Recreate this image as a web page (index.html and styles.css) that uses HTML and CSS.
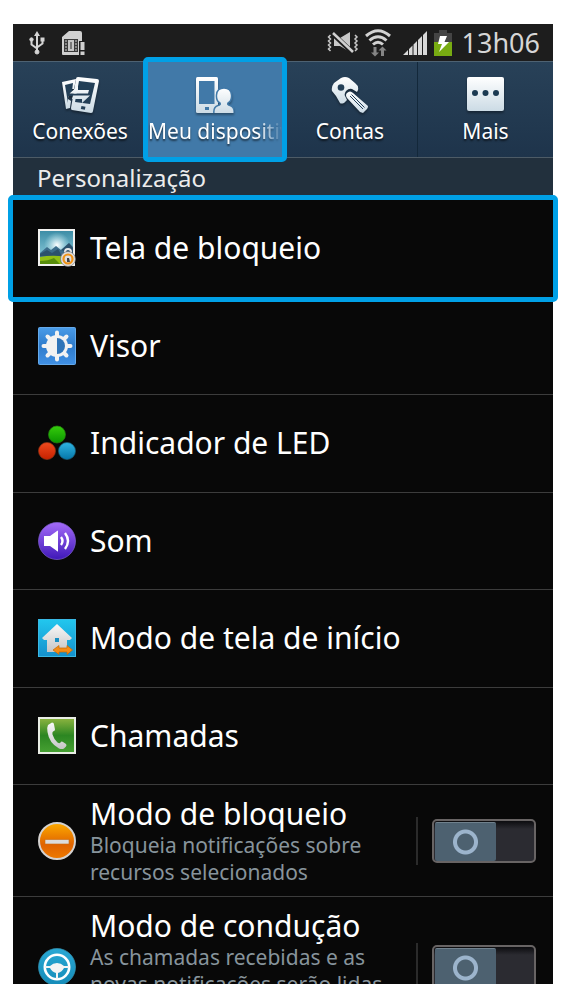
FILE: index.html
```html
<!DOCTYPE html>
<html lang="pt-BR">
<head>
    <meta charset="UTF-8">
    <meta name="viewport" content="width=device-width, initial-scale=1.0">
    <title>Configurações</title>
    <link rel="stylesheet" href="styles.css">
</head>
<body>
    <!-- Degradês usados pelos ícones -->
    <svg class="defs" width="0" height="0" aria-hidden="true">
        <defs>
            <linearGradient id="g-white" x1="0" y1="0" x2="0" y2="1"><stop offset="0" stop-color="#fff"/><stop offset="1" stop-color="#ccdbe5"/></linearGradient>
            <linearGradient id="g-sky" x1="0" y1="0" x2="0" y2="1"><stop offset="0" stop-color="#3d8da6"/><stop offset="1" stop-color="#9bd8e6"/></linearGradient>
            <radialGradient id="g-sun"><stop offset="0" stop-color="#fff"/><stop offset="1" stop-color="#bdeaf2" stop-opacity="0"/></radialGradient>
            <linearGradient id="g-blue" x1="0" y1="0" x2="0" y2="1"><stop offset="0" stop-color="#4a9ce8"/><stop offset=".5" stop-color="#2e7bcb"/><stop offset="1" stop-color="#4090e4"/></linearGradient>
            <linearGradient id="g-led-green" x1="0" y1="0" x2="0" y2="1"><stop offset="0" stop-color="#36cc0c"/><stop offset="1" stop-color="#0a9500"/></linearGradient>
            <linearGradient id="g-led-red" x1="0" y1="0" x2="0" y2="1"><stop offset="0" stop-color="#f04a1e"/><stop offset="1" stop-color="#c62100"/></linearGradient>
            <linearGradient id="g-led-blue" x1="0" y1="0" x2="0" y2="1"><stop offset="0" stop-color="#2fb5e2"/><stop offset="1" stop-color="#0576a8"/></linearGradient>
            <linearGradient id="g-purple" x1="0" y1="0" x2="0" y2="1"><stop offset="0" stop-color="#a46bf8"/><stop offset="1" stop-color="#3f18b8"/></linearGradient>
            <linearGradient id="g-cyan" x1="0" y1="0" x2="0" y2="1"><stop offset="0" stop-color="#22c7ee"/><stop offset="1" stop-color="#1590cc"/></linearGradient>
            <linearGradient id="g-house" x1="0" y1="0" x2="0" y2="1"><stop offset="0" stop-color="#f8f8f8"/><stop offset="1" stop-color="#c6c6c6"/></linearGradient>
            <linearGradient id="g-call" x1="0" y1="0" x2="0" y2="1"><stop offset="0" stop-color="#88b23e"/><stop offset=".5" stop-color="#2c8622"/><stop offset="1" stop-color="#46a032"/></linearGradient>
            <linearGradient id="g-orange" x1="0" y1="0" x2="0" y2="1"><stop offset="0" stop-color="#fdab00"/><stop offset=".6" stop-color="#e06300"/><stop offset="1" stop-color="#ee7a00"/></linearGradient>
            <linearGradient id="g-wheel" x1="0" y1="0" x2="0" y2="1"><stop offset="0" stop-color="#29a8d4"/><stop offset="1" stop-color="#158bb8"/></linearGradient>
        </defs>
    </svg>

    <div class="phone">
        <!-- Barra de status -->
        <header class="status-bar">
            <svg class="usb" width="16" height="24" viewBox="0 0 16 24" fill="#d4d4d4" stroke="#d4d4d4">
                <path d="M8 4v17M2.500 9v4.500l5.500 4M13.500 9v3.500l-5.500 4" fill="none" stroke-width="2"/>
                <path d="M8 0l3 5H5z" stroke="none"/>
                <circle cx="2.500" cy="8.500" r="1.700"/>
                <path d="M11.500 6.500h4v4h-4z" stroke="none"/>
                <circle cx="8" cy="21" r="2"/>
            </svg>
            <svg class="sim" width="24" height="26" viewBox="0 0 24 26">
                <path d="M0 24V7l7-6h11q2 0 2 2v8h-3v14H1q-1 0-1-1z" fill="#d0d0d0"/>
                <path d="M2 9h14v13H2z" fill="#3a3a3a"/>
                <path d="M3 11h2M3 14h2M3 17h2M3 20h2M13 11h2M13 14h2M13 17h2M13 20h2" stroke="#d0d0d0"/>
                <path d="M6 10h6v11H6z" fill="#c4c4c4"/>
                <path d="M8 12h2v7H8z" fill="#777"/>
                <path d="M18.500 12h4v8h-4zM18.500 21.500h4v3.500h-4z" fill="#d0d0d0"/>
            </svg>
            <span class="spacer"></span>
            <svg class="mute" width="32" height="24" viewBox="0 0 32 24">
                <path d="M3.500 4l-2 2 2 2-2 2 2 2-2 2 2 2-2 2 2 2M28 4l2 2-2 2 2 2-2 2 2 2-2 2 2 2-2 2" fill="none" stroke="#c8c8c8" stroke-width="1.500"/>
                <path d="M7 7h6l10-6v20l-10-6H7z" fill="#c8c8c8"/>
                <path d="M6 3l20 19" stroke="#1d1d1d" stroke-width="5"/>
                <path d="M6 2l20 19" stroke="#d0d0d0" stroke-width="2.500"/>
            </svg>
            <svg class="wifi" width="26" height="28" viewBox="0 0 26 28">
                <path d="M1 7q12-10.500 24 0M4.500 11.500q8.500-7.500 17 0M8 15.500q5-4.500 10 0" fill="none" stroke="#d2d2d2" stroke-width="3"/>
                <path d="M8.500 18v5.500H6l4 4 4-4h-2.500V18zM16 27v-5.500h-2.500l4-4 4 4H19V27z" fill="#858585"/>
            </svg>
            <svg class="signal" width="24" height="24" viewBox="0 0 24 24" fill="#d8d8d8">
                <path d="M0 24l5-5v5zM6 24v-6l3.500-3.500V24zM10.500 24V13.500l3.500-3.500v14zM15 24V9l4-4v19zM20 24V4l4-4v24z"/>
            </svg>
            <svg class="battery" width="18" height="26" viewBox="0 0 18 26">
                <path d="M5 0h8v3h5v10H0V3h5z" fill="#444"/>
                <path d="M0 12h18v14H0z" fill="#78ab12"/>
                <path d="M6 6h7l-2.500 6H15L5 22l3-8H4z" fill="#fff"/>
            </svg>
            <time>13h06</time>
        </header>

        <!-- Abas -->
        <nav class="tabs">
            <button class="tab" type="button">
                <svg width="38" height="38" viewBox="0 0 38 38">
                    <path d="M1 7l14-3-2 10H8l-1 10 3 2-1 7-4 1z" fill="url(#g-white)"/>
                    <path d="M4 10l8-2-1 8-4 4v8z" fill="#233f57"/>
                    <path d="M17 2l19 2q2 0 2 2l-6 30q0 2-2 2l-19-3q-1 0-1-2l5-29q0-2 2-2z" fill="url(#g-white)"/>
                    <path d="M18 6l16 2-5 21-15-2z" fill="#233f57"/>
                    <path d="M7 18.500h20v2.500H7z" fill="#233f57"/>
                    <path d="M8.500 18.500L17 11v4h11l-1 3.500zM29 20.500L21 28v-4H11l1-3.500z" fill="url(#g-white)"/>
                    <path d="M20.500 31l4 .7-.7 3-4-.7z" fill="#233f57"/>
                </svg>
                <span class="tab-label">Conexões</span>
            </button>
            <button class="tab active" type="button">
                <svg width="38" height="38" viewBox="0 0 38 38">
                    <rect y="2" width="22" height="36" rx="1.500" fill="url(#g-white)"/>
                    <path d="M3 6h15.500v23H3zM9 32h4v3H9z" fill="#4179a8"/>
                    <path d="M18 39q-1-7 4-8.500 3-.5 2-2.500-4-2-3.500-8Q21 13 28 13t7.500 7q.5 6-3.500 8-1 2 2 2.500 5 1.500 4 8.500z" fill="url(#g-white)" stroke="#4179a8" stroke-width="1.500"/>
                </svg>
                <span class="tab-label">Meu dispositivo</span>
            </button>
            <button class="tab" type="button">
                <svg width="38" height="38" viewBox="0 0 38 38">
                    <path d="M10 3q4-2 8 0l6 5q4 3 3 7l-1 2-5-3q-3-1-6 2-2 3-1 5l2 4-3 3q-3 1-4 0l-4-7-4-5q-1-4 2-8z" fill="url(#g-white)"/>
                    <circle cx="10" cy="12.500" r="3.300" fill="#233f57"/>
                    <path d="M16 18q3-3 6 0l15 13q0 2-1 3l-4 4-3-1-13-14q-2-3 0-5z" fill="url(#g-white)"/>
                    <path d="M19 21l13 13M20.500 19.500l13 13" stroke="#233f57" stroke-width="1"/>
                </svg>
                <span class="tab-label">Contas</span>
            </button>
            <button class="tab" type="button">
                <svg width="38" height="38" viewBox="0 0 38 38">
                    <rect y="2" width="37" height="34" rx="2" fill="url(#g-white)"/>
                    <circle cx="8" cy="18" r="3" fill="#1c3a52"/>
                    <circle cx="18.500" cy="18" r="3" fill="#1c3a52"/>
                    <circle cx="29" cy="18" r="3" fill="#1c3a52"/>
                </svg>
                <span class="tab-label">Mais</span>
            </button>
        </nav>

        <h2 class="section-title">Personalização</h2>

        <!-- Itens simples -->
        <div class="menu">
            <a class="item selected" href="#tela-de-bloqueio">
                <svg class="icon" viewBox="0 0 38 38">
                    <path d="M0 0h37v37H0z" fill="#f2f2f0"/>
                    <path d="M2 2h33v33H2z" fill="url(#g-sky)"/>
                    <circle cx="19" cy="16" r="13" fill="url(#g-sun)"/>
                    <path d="M2 24l7-6 4 3 5-4 5 4 8-7 4 5v12H2z" fill="#3c6d8b"/>
                    <path d="M2 25l7-4 5 3 6-4 4 7H2zM23 21l8-7 4 4v7z" fill="#1f4058" opacity=".6"/>
                    <path d="M2 28q15-3 33 1v6H2z" fill="#91bf15"/>
                    <path d="M2 32q8 0 14-3l6 6H2z" fill="#578d0b"/>
                    <path d="M27 25v-2q0-3 3-3t3 3v2" fill="none" stroke="#e8e8e8" stroke-width="2"/>
                    <circle cx="30" cy="30" r="7.500" fill="#ddd" stroke="#666" stroke-width=".6"/>
                    <circle cx="30" cy="30" r="4.500" fill="none" stroke="#f09318" stroke-width="2.200"/>
                    <path d="M29 29h2l1 4h-3z" fill="#444"/>
                </svg>
                <span class="item-title">Tela de bloqueio</span>
            </a>
            <a class="item" href="#visor">
                <svg class="icon" viewBox="0 0 38 38">
                    <rect x=".5" y=".5" width="37" height="37" rx="1" fill="url(#g-blue)" stroke="#64a9ea"/>
                    <g stroke="#f2f2f2" stroke-width="4" stroke-linecap="round">
                        <path d="M19 5.500v27M5.500 19h27M9.500 9.500l19 19M28.500 9.500l-19 19"/>
                    </g>
                    <circle cx="19" cy="19" r="11" fill="#f2f2f2"/>
                    <path d="M19 11a8 8 0 0 1 0 16z" fill="#2f74b8"/>
                </svg>
                <span class="item-title">Visor</span>
            </a>
            <a class="item" href="#indicador-de-led">
                <svg class="icon" viewBox="0 0 38 38">
                    <circle cx="19" cy="10.500" r="8.500" fill="url(#g-led-green)" stroke="#25830e" stroke-width=".7"/>
                    <circle cx="9" cy="27" r="8.500" fill="url(#g-led-red)" stroke="#8f3213" stroke-width=".7"/>
                    <circle cx="29" cy="27" r="8.500" fill="url(#g-led-blue)" stroke="#175f79" stroke-width=".7"/>
                </svg>
                <span class="item-title">Indicador de LED</span>
            </a>
            <a class="item" href="#som">
                <svg class="icon" viewBox="0 0 38 38">
                    <circle cx="19" cy="19" r="18.500" fill="url(#g-purple)" stroke="#8261d6" stroke-width=".7"/>
                    <path d="M6 14h6l7-5q1-1 1 0v20q0 1-1 0l-7-5H6z" fill="#fff"/>
                    <path d="M23 15q3 4 0 8M27 11q6 8 0 16" fill="none" stroke="#fff" stroke-width="2.400"/>
                </svg>
                <span class="item-title">Som</span>
            </a>
            <a class="item" href="#modo-de-tela-de-inicio">
                <svg class="icon" viewBox="0 0 38 38">
                    <rect x=".5" y=".5" width="37" height="37" fill="url(#g-cyan)" stroke="#39b8e4"/>
                    <path d="M19 5l15 14-2 2h-3v12H9V21H6l-2-2z" fill="url(#g-house)"/>
                    <path d="M17 19h4v4h-4z" fill="#188fc2"/>
                    <path d="M15 31l6-4.500V29h8v-2.500l5.500 4.500-5.500 4.500V33h-8v2.500z" fill="#f58c16" stroke="#c76700" stroke-width=".7"/>
                </svg>
                <span class="item-title">Modo de tela de início</span>
            </a>
            <a class="item" href="#chamadas">
                <svg class="icon" viewBox="0 0 38 38">
                    <path d="M0 0h38v37H0z" fill="#e9ede5"/>
                    <path d="M2 2h34v33H2z" fill="url(#g-call)"/>
                    <path d="M10 8l4-2.500q2 0 2 2l1 5q0 1.500-2 2-1 1-.5 3 1.500 5 5 8 2 1.500 3 0 1-1.500 2.500-.5l3 2q1 1 0 2.500l-2 2q-2 1-5 0Q11 26 9.500 15q-1-4 .5-7z" fill="url(#g-house)"/>
                </svg>
                <span class="item-title">Chamadas</span>
            </a>
        </div>

        <!-- Itens com chave liga/desliga -->
        <label class="item item-switch" for="modo-bloqueio">
            <svg class="icon" viewBox="0 0 38 38">
                <circle cx="19" cy="19" r="18" fill="url(#g-orange)" stroke="#d4d2d0" stroke-width="2"/>
                <path d="M7 17.500h24v4.500H7z" fill="#dcdcdc" stroke="#c96b10" stroke-width=".6"/>
            </svg>
            <span class="item-text">
                <span class="item-title">Modo de bloqueio</span>
                <span class="item-desc">Bloqueia notificações sobre recursos selecionados</span>
            </span>
            <span class="switch-box"><input class="switch" type="checkbox" role="switch" id="modo-bloqueio"></span>
        </label>
        <label class="item item-switch" for="modo-conducao">
            <svg class="icon" viewBox="0 0 38 38">
                <circle cx="19" cy="19" r="18.500" fill="url(#g-wheel)" stroke="#3794b2" stroke-width=".7"/>
                <circle cx="19" cy="19" r="12.200" fill="none" stroke="#fff" stroke-width="2.600"/>
                <path d="M7 18h5q3-3 7-3t7 3h5v2h-5q-2 4-6 5v6h-2v-6q-4-1-6-5H7z" fill="#f4f4f4"/>
            </svg>
            <span class="item-text">
                <span class="item-title">Modo de condução</span>
                <span class="item-desc">As chamadas recebidas e as novas notificações serão lidas automaticamente</span>
            </span>
            <span class="switch-box"><input class="switch" type="checkbox" role="switch" id="modo-conducao"></span>
        </label>
    </div>
</body>
</html>
```
FILE: styles.css
```css
* {
    box-sizing: border-box;
}

body {
    margin: 0;
    padding: 24px 14px 24px 13px;
    background: #fff;
    font-family: "Noto Sans", sans-serif;
    color: #fff;
}

.defs {
    position: absolute;
}

svg {
    flex-shrink: 0;
}

.phone {
    height: calc(100vh - 48px);
    background: #080808;
    overflow-y: clip;
}

/* Barra de status */
.status-bar {
    display: flex;
    align-items: center;
    height: 37px;
    padding: 0 13px 0 16px;
    background: #1d1d1d;
    color: #d6d6d6;
}

.sim {
    margin-left: 17px;
}

.spacer {
    flex-grow: 1;
}

.wifi {
    margin-left: 6px;
}

.signal {
    margin-left: 12px;
}

.battery {
    margin-left: 7px;
}

.status-bar time {
    margin-left: 10px;
    font-size: 27px;
    line-height: 36px;
}

/* Abas */
.tabs {
    display: grid;
    grid-template-columns: repeat(4, 1fr);
    border-top: 1px solid #4e6272;
    border-bottom: 1px solid #4d5b66;
    background: linear-gradient(#284158, #1e344b);
}

.tab {
    position: relative;
    display: flex;
    flex-direction: column;
    align-items: center;
    min-width: 0;
    height: 95px;
    padding: 13px 0 0;
    border: 0;
    border-right: 1px solid #13283a;
    background: none;
    color: #fff;
    font-family: inherit;
    font-size: 21px;
    line-height: 32px;
    text-shadow: 0 2px 2px rgba(0,0,0,0.6);
    cursor: pointer;
}

.tab:last-child {
    border-right: 0;
}

.tab svg {
    filter: drop-shadow(0 2px 1px rgba(0,0,0,0.35));
}

.tab-label {
    max-width: 100%;
    margin-top: 2px;
    overflow: hidden;
    white-space: nowrap;
}

.tab.active {
    background: #4179a8;
}

.tab.active .tab-label {
    mask-image: linear-gradient(to right, #000 82%, transparent);
}

/* Moldura de destaque */
.tab.active::after,
.item.selected::after {
    content: "";
    position: absolute;
    inset: -5px;
    border: 5px solid #00a0e6;
    border-radius: 5px;
    z-index: 1;
}

.section-title {
    margin: 0;
    padding: 0 24px 2px;
    background: #22303d;
    color: #ececec;
    font-size: 24px;
    font-weight: 400;
    line-height: 40px;
}

/* Lista */
.menu {
    display: grid;
    grid-auto-rows: 1fr;
    min-height: 585px;
}

.item {
    position: relative;
    display: flex;
    align-items: center;
    gap: 14px;
    padding: 0 17px 0 25px;
    border-bottom: 1px solid #3c3c3c;
    color: #fff;
    text-decoration: none;
    cursor: pointer;
}

.icon {
    width: 38px;
    height: 38px;
}

.item-title {
    font-size: 30px;
    line-height: 36px;
}

.item-switch {
    padding-top: 11px;
    padding-bottom: 10px;
}

.item-text {
    display: flex;
    flex: 1;
    flex-direction: column;
}

.item-desc {
    color: #87949c;
    font-size: 21px;
    line-height: 27px;
}

.switch-box {
    display: flex;
    align-items: center;
    height: 48px;
    padding-left: 14px;
    border-left: 2px solid #2b2b2b;
}

.switch {
    appearance: none;
    width: 104px;
    height: 44px;
    margin: 0;
    padding: 1px;
    border: 2px solid #686464;
    border-radius: 5px;
    background: linear-gradient(#0c0c0f, #2b2b31 8px);
    cursor: pointer;
}

/* Botão da chave com o anel no centro */
.switch::before {
    content: "";
    display: block;
    width: 61px;
    height: 38px;
    border-top: 1px solid #70818d;
    border-radius: 2px;
    background: radial-gradient(circle, transparent 8px, #9cb4cc 9px, #9cb4cc 12px, transparent 13px), #4d6170;
}

.switch:checked::before {
    margin-left: auto;
}
```
